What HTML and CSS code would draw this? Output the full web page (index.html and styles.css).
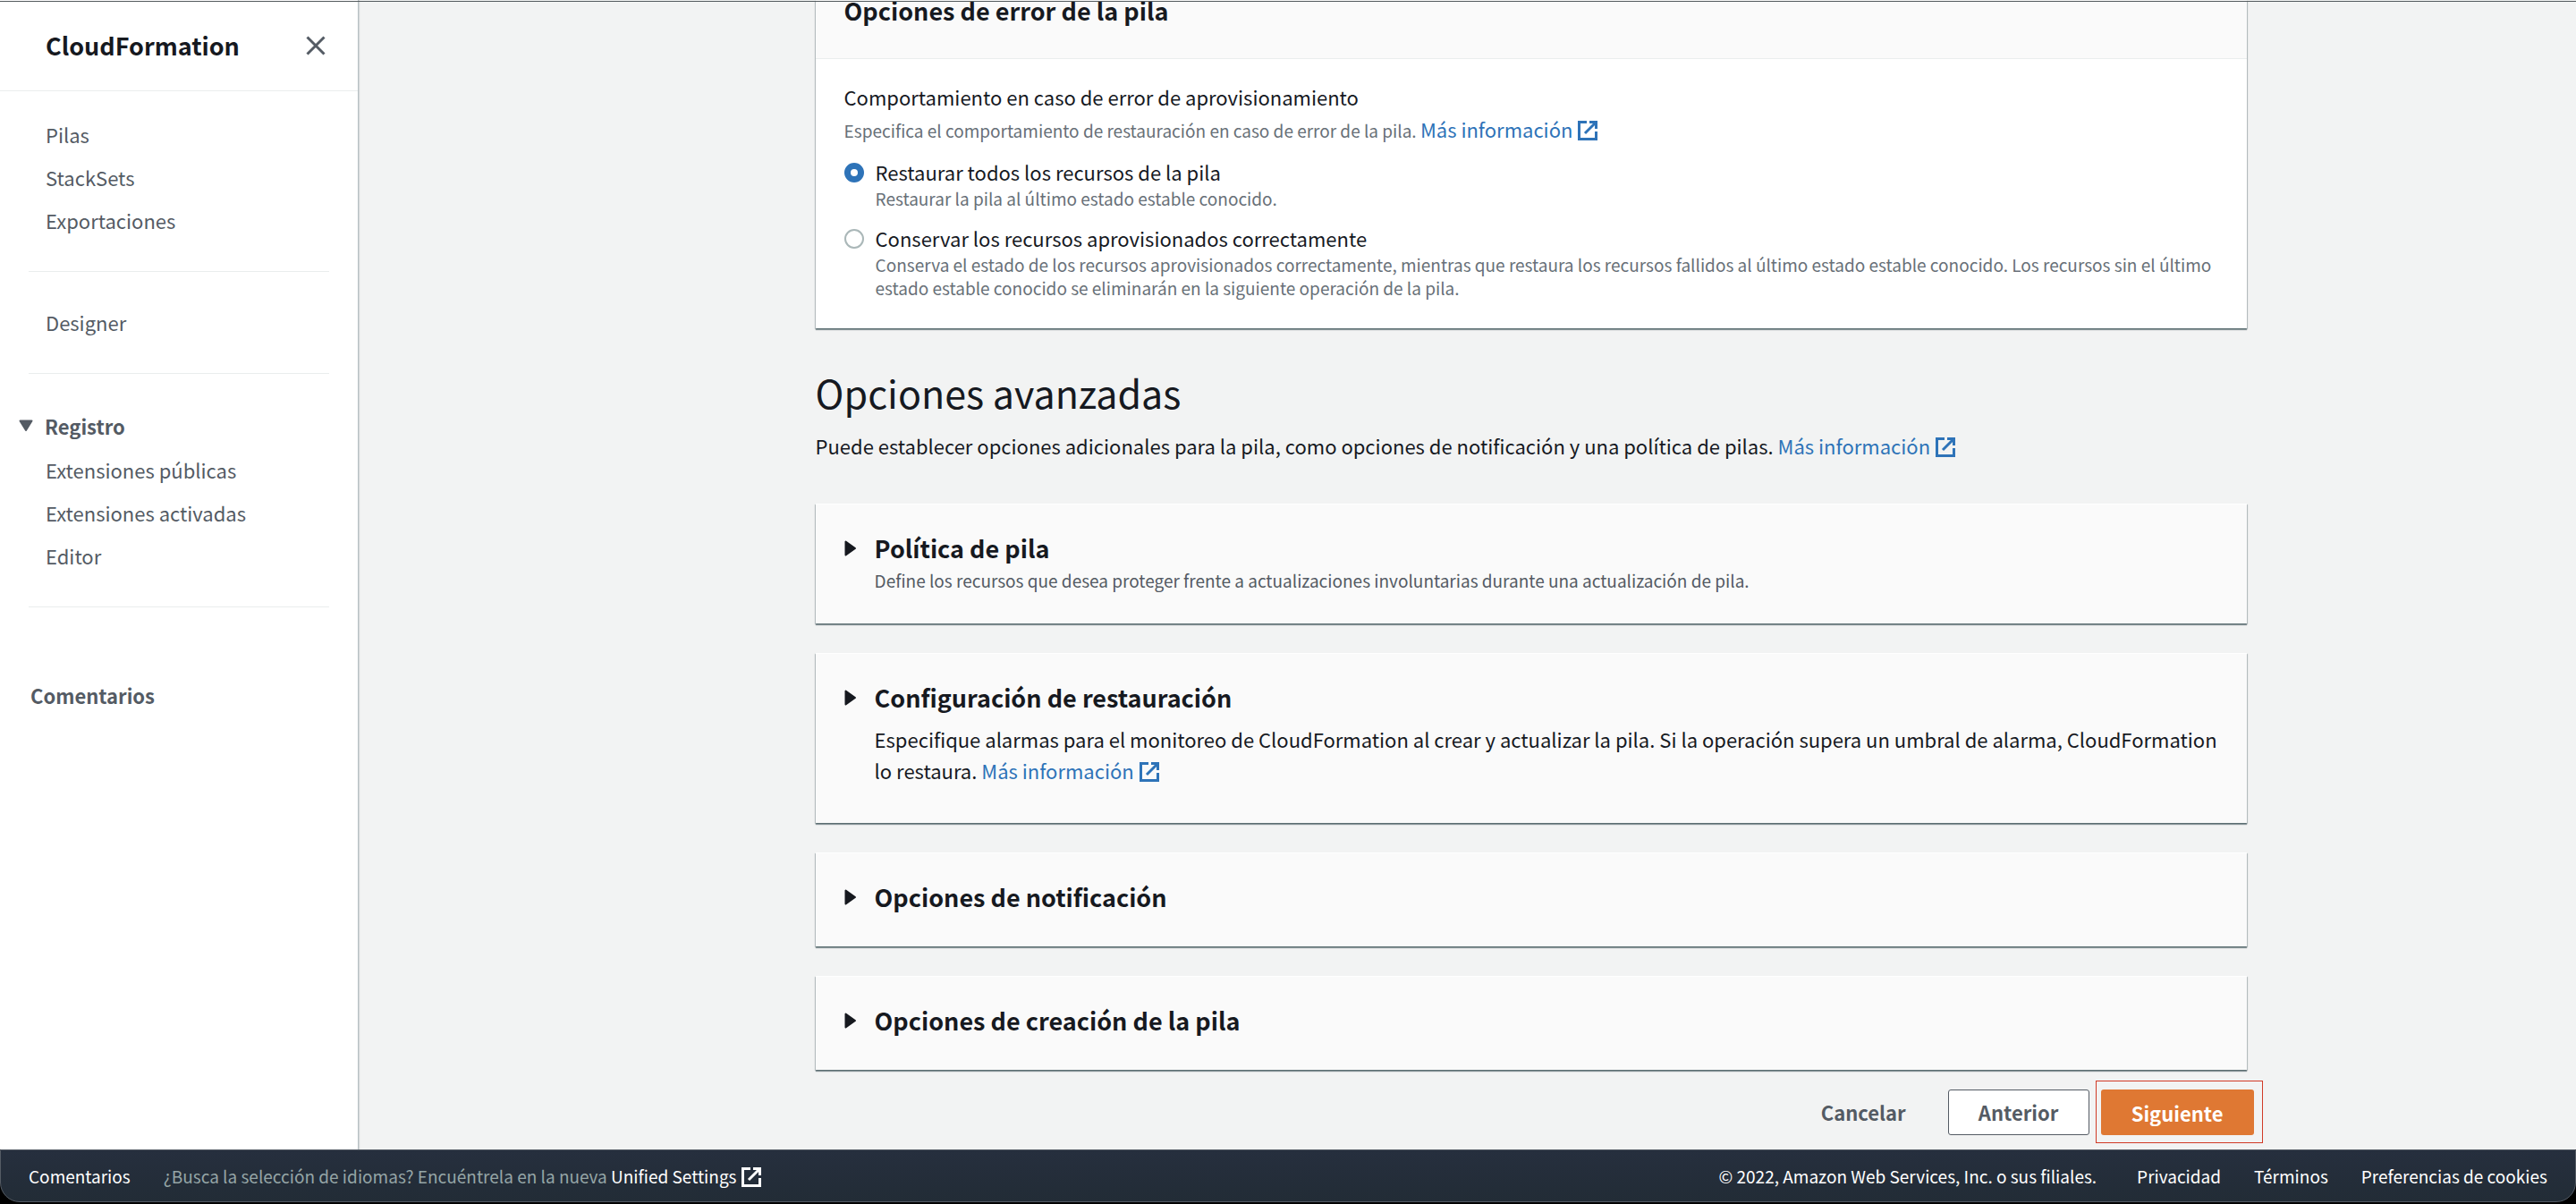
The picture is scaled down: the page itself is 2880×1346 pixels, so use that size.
FILE: index.html
```html
<!DOCTYPE html>
<html lang="es">
<head>
<meta charset="utf-8">
<title>CloudFormation</title>
<link rel="stylesheet" href="styles.css">
</head>
<body>
<svg class="sprite" aria-hidden="true">
  <symbol id="external" viewBox="0 0 24 24"><path d="M11 2.500H2.500v19h19V13M14 2.500h7.500V10M9 15 21 3" fill="none" stroke="currentColor" stroke-width="3"/></symbol>
  <symbol id="caret" viewBox="0 0 14 18"><path d="M1.500 1.500v15L12 9z" fill="currentColor" stroke="currentColor" stroke-width="2" stroke-linejoin="round"/></symbol>
</svg>
<div class="shell">
  <aside class="sidebar">
    <header class="sidebar-header">
      <h2 class="service">CloudFormation</h2>
      <button class="close" type="button" aria-label="Cerrar"><svg viewBox="0 0 22 22" width="22" height="22"><path d="M1.500 1.500l19 19M20.500 1.500l-19 19" fill="none" stroke="currentColor" stroke-width="3"/></svg></button>
    </header>
    <nav class="nav">
      <a href="#pilas">Pilas</a>
      <a href="#stacksets">StackSets</a>
      <a href="#exportaciones">Exportaciones</a>
      <hr>
      <a href="#designer">Designer</a>
      <hr>
      <button class="section" type="button" aria-expanded="true"><svg viewBox="0 0 16 14" width="16" height="14"><path d="M1.500 1.500h13L8 12z" fill="currentColor" stroke="currentColor" stroke-width="2" stroke-linejoin="round"/></svg>Registro</button>
      <a href="#publicas">Extensiones públicas</a>
      <a href="#activadas">Extensiones activadas</a>
      <a href="#editor">Editor</a>
      <hr>
      <a class="feedback" href="#comentarios">Comentarios</a>
    </nav>
  </aside>
  <main class="main">
    <div class="content">
      <section class="card">
        <header class="card-header"><h2 class="title">Opciones de error de la pila</h2></header>
        <fieldset class="card-body">
          <legend class="label">Comportamiento en caso de error de aprovisionamiento</legend>
          <p class="hint">Especifica el comportamiento de restauración en caso de error de la pila. <a class="link" href="#info-error">Más información <svg class="ext"><use href="#external"/></svg></a></p>
          <div class="option">
            <input type="radio" name="fallo" id="restaurar" checked>
            <label for="restaurar">Restaurar todos los recursos de la pila<small>Restaurar la pila al último estado estable conocido.</small></label>
          </div>
          <div class="option">
            <input type="radio" name="fallo" id="conservar">
            <label for="conservar">Conservar los recursos aprovisionados correctamente<small>Conserva el estado de los recursos aprovisionados correctamente, mientras que restaura los recursos fallidos al último estado estable conocido. Los recursos sin el último estado estable conocido se eliminarán en la siguiente operación de la pila.</small></label>
          </div>
        </fieldset>
      </section>

      <h1 class="heading">Opciones avanzadas</h1>
      <p class="intro">Puede establecer opciones adicionales para la pila, como opciones de notificación y una política de pilas. <a class="link" href="#info-avanzadas">Más información <svg class="ext"><use href="#external"/></svg></a></p>

      <div class="panels">
        <section class="panel">
          <h2 class="title"><button type="button" aria-expanded="false"><svg class="caret"><use href="#caret"/></svg>Política de pila</button></h2>
          <p class="panel-hint">Define los recursos que desea proteger frente a actualizaciones involuntarias durante una actualización de pila.</p>
        </section>
        <section class="panel">
          <h2 class="title"><button type="button" aria-expanded="false"><svg class="caret"><use href="#caret"/></svg>Configuración de restauración</button></h2>
          <p class="panel-text">Especifique alarmas para el monitoreo de CloudFormation al crear y actualizar la pila. Si la operación supera un umbral de alarma, CloudFormation lo restaura. <a class="link" href="#info-restauracion">Más información <svg class="ext"><use href="#external"/></svg></a></p>
        </section>
        <section class="panel panel-plain">
          <h2 class="title"><button type="button" aria-expanded="false"><svg class="caret"><use href="#caret"/></svg>Opciones de notificación</button></h2>
        </section>
        <section class="panel panel-plain">
          <h2 class="title"><button type="button" aria-expanded="false"><svg class="caret"><use href="#caret"/></svg>Opciones de creación de la pila</button></h2>
        </section>
      </div>

      <div class="actions">
        <button class="btn btn-text" type="button">Cancelar</button>
        <button class="btn btn-normal" type="button">Anterior</button>
        <span class="marker"><button class="btn btn-primary" type="submit">Siguiente</button></span>
      </div>
    </div>
  </main>
</div>
<div class="footer-frame">
  <footer class="footer">
    <a href="#feedback">Comentarios</a>
    <p class="language">¿Busca la selección de idiomas? Encuéntrela en la nueva <a href="#settings">Unified Settings <svg class="ext"><use href="#external"/></svg></a></p>
    <span class="copyright">© 2022, Amazon Web Services, Inc. o sus filiales.</span>
    <a href="#privacidad">Privacidad</a>
    <a href="#terminos">Términos</a>
    <a href="#cookies">Preferencias de cookies</a>
  </footer>
</div>
</body>
</html>
```
FILE: styles.css
```css
* { box-sizing: border-box; }

body {
  margin: 0;
  height: 100vh;
  display: flex;
  flex-direction: column;
  position: relative;
  overflow: hidden;
  background: #f2f3f3;
  color: #16191f;
  font: 22px/32px "Noto Sans CJK SC", "Noto Sans", sans-serif;
}

body::before {
  content: "";
  position: absolute;
  inset: 1px 0 auto;
  height: 1px;
  background: #545b5e;
  z-index: 1;
}

h1, h2, p { margin: 0; }
button { font: inherit; color: inherit; background: none; border: 0; padding: 0; }
a { color: inherit; text-decoration: none; }
.sprite { display: none; }

.shell { flex: 1; min-height: 0; display: flex; }

/* Side navigation */
.sidebar {
  flex: 0 0 401px;
  background: #fff;
  border-right: 1px solid #b8c0c4;
  box-shadow: 1px 0 1px rgba(0, 28, 36, .12);
  color: #545b64;
}
.sidebar-header {
  height: 102px;
  padding: 0 36px 0 51px;
  display: flex;
  align-items: center;
  justify-content: space-between;
  border-bottom: 1px solid #eaeded;
}
.service { font-size: 27px; line-height: 36px; color: #16191f; }
.close { display: flex; }
.nav { display: flex; flex-direction: column; padding: 24px 32px 0; }
.nav a { line-height: 48px; padding-left: 19px; }
.nav hr { width: 100%; margin: 33px 0 32px; border: 0; border-top: 1px solid #eaeded; }
.section {
  display: flex;
  align-items: center;
  gap: 13px;
  margin: 2px 0 1px -11px;
  line-height: 48px;
  font-weight: 700;
}
.nav .feedback { margin-top: 42px; padding-left: 2px; font-weight: 700; }

/* Content column */
.main {
  flex: 1;
  min-width: 0;
  display: grid;
  grid-template-columns: minmax(0, 510fr) minmax(0, 1600px) minmax(0, 368fr);
}
.content { grid-column: 2; }

.card, .panel {
  box-shadow: 0 2px 1px rgba(0, 28, 36, .4), 1px 1px 1px rgba(0, 28, 36, .2), -1px 1px 1px rgba(0, 28, 36, .2);
}
.card { background: #fff; }
.card-header { background: #fafafa; padding: 0 32px 41px; border-bottom: 1px solid #eaeded; }
.title { font-size: 27px; line-height: 36px; }
.card-header .title { line-height: 24px; }
.card-body { margin: 0; border: 0; padding: 26px 32px 32px; }
.label { float: left; padding: 0; }
.hint { clear: both; padding-top: 2px; font-size: 19px; line-height: 36px; color: #687078; }
.link { font-size: 22px; color: #2e73b8; }
.ext { width: 24px; height: 24px; vertical-align: -4px; }

.option { display: flex; gap: 13px; margin-top: 12px; }
.option + .option { margin-top: 15px; }
.option input {
  appearance: none;
  flex: none;
  width: 22px;
  height: 22px;
  margin: 6px 0 0;
  border: 2px solid #aab7b8;
  border-radius: 50%;
  background: #fff;
}
.option input:checked { border: 7px solid #2e73b8; }
.option small { display: block; margin-top: 1px; font-size: 19px; line-height: 26px; color: #687078; }

.heading { margin-top: 43px; font-size: 43px; line-height: 56px; font-weight: 400; }
.intro { margin-top: 15px; line-height: 34px; }

.panels { display: flex; flex-direction: column; gap: 33px; margin-top: 48px; }
.panel { background: #fafafa; border-top: 1px solid #fff; padding: 31px 24px 35px 32px; }
.panel-plain { padding-bottom: 37px; }
.panel button { display: flex; align-items: center; gap: 20px; font-weight: 700; }
.caret { width: 14px; height: 18px; }
.panel-hint { margin: 5px 0 0 34px; font-size: 19px; line-height: 26px; color: #545b64; }
.panel-text { margin: 11px 0 6px 34px; line-height: 35px; }

.actions {
  display: flex;
  align-items: center;
  justify-content: flex-end;
  gap: 7px;
  margin: 12px -18px 0 0;
}
.btn { height: 51px; border-radius: 3px; font-weight: 700; color: #545b64; }
.btn-text { margin-right: 40px; }
.btn-normal { width: 158px; background: #fff; border: 1px solid #545b64; }
.btn-primary { width: 171px; background: #df7833; color: #fff; }
.marker { display: flex; padding: 9px 9px 8px 5px; border: 1px solid #d13a26; }

/* Bottom bar */
.footer-frame { flex: none; background: #000; padding-bottom: 2px; }
.footer {
  height: 59px;
  display: flex;
  align-items: center;
  padding: 0 31px;
  gap: 37px;
  background: linear-gradient(#262f3e, #222c36);
  border: 1px solid #545b64;
  border-radius: 0 0 22px 22px;
  color: #fff;
  font-size: 19px;
  line-height: 26px;
}
.language { color: #95a5a6; }
.language a { color: #fff; }
.footer .ext { vertical-align: -5px; }
.copyright { margin-left: auto; margin-right: 8px; }
```
